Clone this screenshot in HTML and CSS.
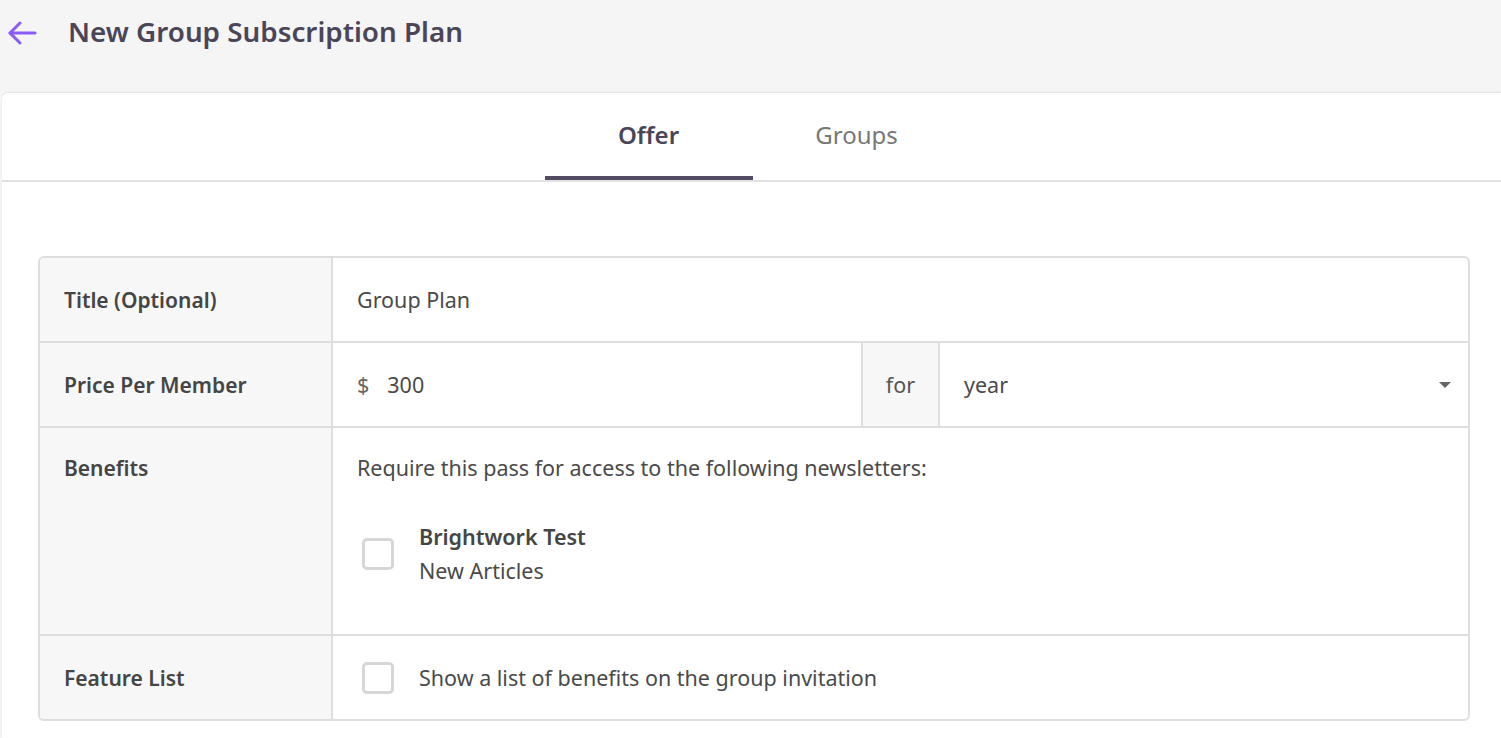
FILE: index.html
```html
<!DOCTYPE html>
<html lang="en">
<head>
  <meta charset="UTF-8">
  <meta name="viewport" content="width=device-width, initial-scale=1.0">
  <title>New Group Subscription Plan</title>
  <link rel="stylesheet" href="styles.css">
</head>
<body>

<div class="page-header">
  <a class="back-link" href="#">
    <svg width="30" height="26" viewBox="0 0 30 26" fill="none" stroke="#8b5cf6" stroke-width="3" stroke-linecap="round" stroke-linejoin="round">
      <path d="M28 13H3"/>
      <path d="M13 3L3 13l10 10"/>
    </svg>
  </a>
  <h1>New Group Subscription Plan</h1>
</div>

<div class="card">
  <div class="tabs">
    <div class="tab active">Offer</div>
    <div class="tab">Groups</div>
  </div>

  <div class="card-body">
    <div class="form-table">
      <div class="row">
        <div class="label">Title (Optional)</div>
        <div class="value">Group Plan</div>
      </div>

      <div class="row">
        <div class="label">Price Per Member</div>
        <div class="value price">
          <div class="price-input"><span class="currency">$</span>300</div>
          <div class="addon">for</div>
          <div class="select">
            <span>year</span>
            <span class="caret"></span>
          </div>
        </div>
      </div>

      <div class="row tall">
        <div class="label">Benefits</div>
        <div class="value stacked">
          <p>Require this pass for access to the following newsletters:</p>
          <div class="check-item">
            <span class="checkbox"></span>
            <div>
              <div class="item-title">Brightwork Test</div>
              <div class="item-sub">New Articles</div>
            </div>
          </div>
        </div>
      </div>

      <div class="row">
        <div class="label">Feature List</div>
        <div class="value">
          <div class="check-item">
            <span class="checkbox"></span>
            <span>Show a list of benefits on the group invitation</span>
          </div>
        </div>
      </div>
    </div>
  </div>
</div>

</body>
</html>
```

FILE: styles.css
```css
* {
  box-sizing: border-box;
}
body {
  font-family: "Noto Sans", sans-serif;
  background-color: #f5f5f5;
  color: #444;
  margin: 0;
  padding: 0;
}
.page-header {
  height: 93px;
  display: flex;
  align-items: flex-start;
  padding-left: 7px;
}
.back-link {
  display: flex;
  margin-top: 20px;
  width: 61px;
}
.page-header h1 {
  margin: 12px 0 0 0;
  font-size: 27.8px;
  font-weight: 600;
  color: #4b4559;
}
.card {
  background: #fff;
  margin-left: 2px;
  border-radius: 6px 0 0 0;
  box-shadow: 0 -1px 2px rgba(0, 0, 0, 0.08);
  min-height: 645px;
}
.tabs {
  display: flex;
  justify-content: center;
  padding-left: 2px;
  border-bottom: 2px solid #e2e2e2;
}
.tab {
  width: 208px;
  text-align: center;
  font-size: 24px;
  color: #777;
  padding: 25px 0 25px;
  border-bottom: 4px solid transparent;
}
.tab.active {
  color: #4b4559;
  font-weight: 600;
  border-bottom-color: #524b62;
}
.card-body {
  padding: 74px 31px 0 36px;
}
.form-table {
  border: 2px solid #dedede;
  border-radius: 6px;
  overflow: hidden;
  font-size: 21.5px;
}
.row {
  display: flex;
  min-height: 85px;
  border-top: 2px solid #dedede;
}
.row:first-child {
  border-top: none;
  min-height: 83px;
}
.row.tall {
  min-height: 208px;
}
.label {
  width: 293px;
  flex: none;
  background: #f7f7f7;
  border-right: 2px solid #dedede;
  font-weight: 600;
  font-size: 21px;
  color: #454545;
  padding: 0 24px;
  display: flex;
  align-items: center;
}
.row.tall .label {
  align-items: flex-start;
  padding-top: 26px;
}
.value {
  flex: 1;
  display: flex;
  align-items: center;
  padding: 0 24px;
  color: #4a4a4a;
}
.value.price {
  padding: 0;
  align-items: stretch;
}
.price-input {
  width: 528px;
  padding-left: 24px;
  display: flex;
  align-items: center;
}
.currency {
  margin-right: 18px;
  color: #666;
}
.addon {
  width: 79px;
  background: #f7f7f7;
  border-left: 2px solid #dedede;
  border-right: 2px solid #dedede;
  display: flex;
  align-items: center;
  justify-content: center;
  color: #555;
}
.select {
  flex: 1;
  display: flex;
  align-items: center;
  justify-content: space-between;
  padding: 0 17px 0 24px;
}
.caret {
  width: 0;
  height: 0;
  border-left: 6px solid transparent;
  border-right: 6px solid transparent;
  border-top: 6px solid #666;
}
.value.stacked {
  flex-direction: column;
  align-items: flex-start;
  padding-top: 25px;
}
.value.stacked p {
  margin: 0 0 38px;
}
.check-item {
  display: flex;
  align-items: center;
  gap: 25px;
  padding-left: 5px;
}
.checkbox {
  width: 32px;
  height: 32px;
  border: 3px solid #d6d6d6;
  border-radius: 5px;
  flex: none;
}
.item-title {
  font-weight: 600;
  color: #454545;
  line-height: 34px;
}
.item-sub {
  line-height: 34px;
}
```
